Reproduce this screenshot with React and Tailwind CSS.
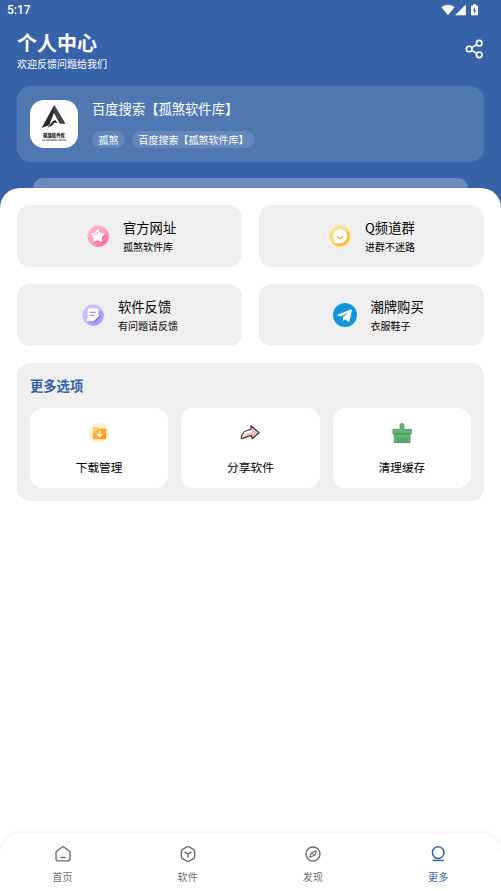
import React from 'react';

const StarIcon = () => (
    <svg width="22" height="22" viewBox="0 0 22 22">
        <defs>
            <linearGradient id="pink" x1="0" y1="0" x2="1" y2="1">
                <stop offset="0" stopColor="#ffb9d4" />
                <stop offset="0.5" stopColor="#ff9dc0" />
                <stop offset="1" stopColor="#ff5c93" />
            </linearGradient>
        </defs>
        <circle cx="11.2" cy="11.2" r="10.7" fill="url(#pink)" />
        <path d="M11.8 5.6l1.9 3.3 4.2.9-2.9 3 .5 4.3-3.7-1.8-3.8 1.8.5-4.1-3-2.9 4.1-.8z" fill="#f2407d" stroke="#f2407d" strokeWidth="1.6" strokeLinejoin="round" opacity="0.7" />
        <path d="M10.8 4.7l1.9 3.6 4.2.7-2.9 3 .5 4.2-3.7-1.8L7 16.2l.5-4.1-3-3 4.1-.7z" fill="#fff" stroke="#fff" strokeWidth="1.6" strokeLinejoin="round" />
        <path d="M8.4 9.4l1.2-.3.8-1.6" fill="none" stroke="#f784ab" strokeWidth="0.9" strokeLinecap="round" />
    </svg>
);

const ChatIcon = () => (
    <svg width="22" height="22" viewBox="0 0 22 22">
        <circle cx="11.2" cy="11.2" r="10.7" fill="#ffdc7c" />
        <path d="M3.8 18c3 3.8 9.8 4.1 13.7.5 3.3-3.3 3.8-8.9 1.2-12.5z" fill="#fdbf32" />
        <path d="M11.2 4.2a7 7 0 1 1 0 14H4.8l1-2.4a7 7 0 0 1 5.4-11.6z" fill="#fff" />
        <path d="M8.4 11.8l2.3 1.4 1 .1 2.3-1.5" fill="none" stroke="#f5ad35" strokeWidth="1.3" strokeLinecap="round" strokeLinejoin="round" />
    </svg>
);

const FeedbackIcon = () => (
    <svg width="22" height="22" viewBox="0 0 22 22">
        <circle cx="11.2" cy="11.2" r="10.7" fill="#c8bdfc" />
        <path d="M5.2 19.2L18.2 5.9l3.1 3a10.7 10.7 0 0 1-10 13z" fill="#ad9af9" />
        <path d="M6.8 4.5H15c1.1 0 1.3.7 1.3 1.6v7.5l-3.5 3.5H6.2c-1.4 0-2.1-1-1.7-2.2h1.2V6c0-.9.3-1.5 1.1-1.5z" fill="#fff" />
        <path d="M8.2 8.3h5.2M8.2 11.3h4" stroke="#a38df3" strokeWidth="1.2" strokeLinecap="round" />
        <path d="M12.3 17.1l5.2-5.3" stroke="#8168df" strokeWidth="2.3" strokeLinecap="round" />
        <path d="M11.5 16.4l5-5.1" stroke="#fff" strokeWidth="1.7" strokeLinecap="round" />
    </svg>
);

const PlaneIcon = () => (
    <svg width="24" height="24" viewBox="0 0 24 24">
        <circle cx="12" cy="12" r="12" fill="#1296db" />
        <path d="M18.4 6.2L4.9 11.5c-.5.3-.5.7 0 .9l3.5 1.1 7.5-5-5.8 5.8-.2 3.8 2-1.9 3.5 2.5c.6.3 1 .1 1.2-.6l2.1-10.2c.1-1.1-.1-1.8-.3-1.7z" fill="#fff" />
    </svg>
);

const DownloadIcon = () => (
    <svg width="20" height="20" viewBox="0 0 20 20">
        <defs>
            <linearGradient id="folder" x1="0" y1="0" x2="1" y2="1">
                <stop offset="0" stopColor="#ffc456" />
                <stop offset="1" stopColor="#ff9307" />
            </linearGradient>
        </defs>
        <circle cx="10" cy="10" r="10" fill="#fff2d4" />
        <path d="M4.8 4h3.8l1.7 1.5H16c.8 0 1.2.4 1.2 1.2v8.1c0 .9-.4 1.4-1.3 1.4H5.2c-.8 0-1.2-.5-1.2-1.3V4.8c0-.5.3-.8.8-.8z" fill="url(#folder)" />
        <path d="M4 9.2l5.9-3.8L8.6 4H4.8c-.5 0-.8.3-.8.8z" fill="#ffcf70" />
        <path d="M10.6 8v5M8.2 11l2.4 2.4 2.4-2.4" fill="none" stroke="#fff" strokeWidth="1.4" />
    </svg>
);

const ForwardIcon = () => (
    <svg width="20" height="20" viewBox="0 0 20 20">
        <path d="M2.3 16.8c.5-4.4 3.8-7 9.4-7.2l.4-4.6 7 5.6-6.6 5.6-.7-2.6c-4 0-5.4 3-9.5 3.2z" fill="#ffbdb7" />
        <path d="M1.2 15.6c.5-5.6 4.3-9 9.8-9V2.7l8 7.1-6.9 5.9-.7-3.1c-4.1 0-6.1 2.7-10.2 3z" fill="none" stroke="#373737" strokeWidth="1.2" strokeLinejoin="round" />
    </svg>
);

const BroomIcon = () => (
    <svg width="20" height="20" viewBox="0 0 20 20">
        <path d="M8.1 6.4V1.9c0-2 3.8-2 3.8 0v4.5h7.4v4.4H18v8.7H2.3v-8.7H1V6.4z" fill="#5fba77" stroke="#5a8c68" strokeWidth="0.9" />
        <path d="M2.3 10.8H18M6.2 19.2v-4.7M9.2 19.2v-4.7M12.2 19.2v-4.7M15 19.2v-4.7" stroke="#4c7958" strokeWidth="0.9" />
    </svg>
);

const HomeIcon = () => (
    <svg width="16" height="16" viewBox="0 0 16 16" fill="none" stroke="currentColor" strokeWidth="1.4" strokeLinejoin="round">
        <path d="M1 6.4c0-.5.2-.8.6-1.1L6.8 1.2c.8-.6 1.6-.6 2.4 0l5.2 4.1c.4.3.6.6.6 1.1v6.7c0 1.2-.6 1.8-1.8 1.8H2.8C1.6 14.9 1 14.3 1 13.1z" />
        <path d="M5.3 11.5h5.4" />
    </svg>
);

const BoxIcon = () => (
    <svg width="16" height="16" viewBox="0 0 16 16" fill="none" stroke="currentColor" strokeWidth="1.4" strokeLinejoin="round">
        <path d="M6.9.9c.8-.4 1.4-.4 2.2 0l4.4 2.5c.8.4 1.1.9 1.1 1.8v5.6c0 .9-.3 1.4-1.1 1.8l-4.4 2.5c-.8.4-1.4.4-2.2 0l-4.4-2.5c-.8-.4-1.1-.9-1.1-1.8V5.2c0-.9.3-1.4 1.1-1.8z" />
        <path d="M4.5 5.9L8 7.9l3.5-2M8 7.9v3.9" />
    </svg>
);

const CompassIcon = () => (
    <svg width="16" height="16" viewBox="0 0 16 16" fill="none" stroke="currentColor" strokeWidth="1.4" strokeLinejoin="round">
        <circle cx="8" cy="8" r="7" />
        <path d="M11.3 4.7L9.8 9.2l-5.1 2.1 1.6-4.6zM7.2 7.2l1.6 1.6" strokeWidth="1.2" />
    </svg>
);

const MoreIcon = () => (
    <svg width="16" height="16" viewBox="0 0 16 16" fill="none" stroke="currentColor" strokeWidth="1.5">
        <circle cx="8.2" cy="6.6" r="5.8" />
        <path d="M2.6 14.4h11.2" />
    </svg>
);

const Logo = () => (
    <div className="flex h-12 w-12 flex-col items-center rounded-[14px] bg-white pt-[5px]">
        <svg width="26" height="24" viewBox="0 0 26 24">
            <path d="M13.2 0L24.2 18.5h-5.4L13 7.7 8.3 20 .6 23z" fill="#292929" />
            <path d="M13.2 0l11 18.5h-5.4L13 7.7z" fill="#45433d" />
            <path d="M6.3 23l5.4-6.8 2.7-1.2 2.2 3.1-3.5-.3-2 2.8z" fill="#292929" />
        </svg>
        <span className="mt-[3px] text-[4.4px] leading-[6px] font-black whitespace-nowrap text-[#222]">孤煞软件库</span>
        <span className="text-[2.4px] leading-[4px] font-bold whitespace-nowrap text-[#444]">Gu Sha Ruan Jian Ku</span>
    </div>
);

const links = [
    { title: '官方网址', desc: '孤煞软件库', icon: StarIcon, pad: 'pl-[70px]' },
    { title: 'Q频道群', desc: '进群不迷路', icon: ChatIcon, pad: 'pl-[70px]' },
    { title: '软件反馈', desc: '有问题请反馈', icon: FeedbackIcon, pad: 'pl-[65px]' },
    { title: '潮牌购买', desc: '衣服鞋子', icon: PlaneIcon, pad: 'pl-[73.5px]' },
];

const options = [
    { label: '下载管理', icon: DownloadIcon },
    { label: '分享软件', icon: ForwardIcon },
    { label: '清理缓存', icon: BroomIcon },
];

const tabs = [
    { label: '首页', icon: HomeIcon },
    { label: '软件', icon: BoxIcon },
    { label: '发现', icon: CompassIcon },
    { label: '更多', icon: MoreIcon, active: true },
];

const StatusBar = () => (
    <div className="flex h-5 items-center justify-between pr-[22px] pl-[7px]">
        <span className="font-[Roboto,sans-serif] text-[12px] leading-5 font-medium">5:17</span>
        <div className="flex items-center">
            <svg width="14" height="12" viewBox="0 0 14 12" fill="#fff">
                <path d="M.4 3.2C4-.2 10-.2 13.6 3.2L7 11.2z" />
            </svg>
            <svg width="11" height="12" viewBox="0 0 11 12" fill="#fff">
                <path d="M10.9.5v10.7H0z" />
            </svg>
            <svg className="ml-[5px]" width="8" height="12" viewBox="0 0 8 12" fill="#fff">
                <path d="M2.1.2h2.8v1.2h1.4c.4 0 .7.3.7.7v8.4c0 .4-.3.7-.7.7H.7c-.4 0-.7-.3-.7-.7V2.1c0-.4.3-.7.7-.7h1.4z" />
                <path d="M4 3.1L1.9 6.7h1.3V10l2.1-3.9H4z" fill="#3663a8" />
            </svg>
        </div>
    </div>
);

const App = () => (
    <div className="flex h-[891px] w-[501px] flex-col overflow-hidden bg-white font-['Noto_Sans_CJK_SC',sans-serif] text-black">
        <header className="h-[208px] shrink-0 bg-[#3663a8] text-white">
            <StatusBar />
            <div className="flex h-[66px] items-start justify-between pr-[17px] pl-[17px]">
                <div className="pt-[8px]">
                    <h1 className="text-[20px] leading-[29px] font-bold">个人中心</h1>
                    <p className="text-[10px] leading-[13px]">欢迎反馈问题给我们</p>
                </div>
                <svg className="mt-[19px]" width="19" height="20" viewBox="0 0 19 20" fill="none" stroke="#fff" strokeWidth="1.6">
                    <circle cx="4.2" cy="10" r="2.8" />
                    <circle cx="14.2" cy="4.2" r="2.8" />
                    <circle cx="14.2" cy="15.8" r="2.8" />
                    <path d="M6.7 8.6l5-3M6.7 11.4l5 3" />
                </svg>
            </div>

            {/* Profile card */}
            <div className="mx-[17px] flex h-[75.5px] items-center rounded-[14px] bg-[#4f78b2] pl-[13px]">
                <Logo />
                <div className="ml-[14px]">
                    <div className="text-[13.3px] leading-[20px]">百度搜索【孤煞软件库】</div>
                    <div className="mt-3 flex gap-[7px] text-[10px] leading-[17px]">
                        <span className="rounded-full bg-[#6588bc] px-[6.5px]">孤煞</span>
                        <span className="rounded-full bg-[#6588bc] px-[6.5px]">百度搜索【孤煞软件库】</span>
                    </div>
                </div>
            </div>
            <div className="mx-[33px] mt-[16.5px] h-[30px] rounded-t-[10px] bg-[#6b8bbe]" />
        </header>

        <main className="relative -mt-5 flex-1 rounded-t-[20px] bg-white px-[17px] pt-[17px]">
            <div className="grid grid-cols-2 gap-[17px]">
                {links.map(({ title, desc, icon: Icon, pad }) => (
                    <div key={title} className={`flex h-[62px] items-center gap-[14px] rounded-[13px] bg-[#efefef] ${pad}`}>
                        <Icon />
                        <div>
                            <div className="text-[13.3px] leading-[20px]">{title}</div>
                            <div className="mt-px text-[10px] leading-[15px]">{desc}</div>
                        </div>
                    </div>
                ))}
            </div>

            {/* More options */}
            <section className="mt-[17px] h-[138px] rounded-[13px] bg-[#efefef] px-[13px] pt-[13px]">
                <h2 className="text-[13.3px] leading-[20px] font-bold text-[#3663a8]">更多选项</h2>
                <div className="mt-3 grid grid-cols-3 gap-[13.2px]">
                    {options.map(({ label, icon: Icon }) => (
                        <div key={label} className="flex h-20 flex-col items-center rounded-[13px] bg-white pt-[15px]">
                            <Icon />
                            <span className="mt-[15px] text-[11.7px] leading-[18px]">{label}</span>
                        </div>
                    ))}
                </div>
            </section>
        </main>

        <nav className="relative grid h-[57px] shrink-0 grid-cols-4 rounded-t-[20px] bg-white shadow-[0_0_7px_rgba(0,0,0,0.09)]">
            {tabs.map(({ label, icon: Icon, active }) => (
                <div key={label} className={`flex flex-col items-center pt-[11.5px] ${active ? 'text-[#3663a8]' : 'text-[#6e6e6e]'}`}>
                    <Icon />
                    <span className="mt-[8.5px] text-[10px] leading-[14px] tracking-[0.4px]">{label}</span>
                </div>
            ))}
        </nav>
    </div>
);

export default App;
